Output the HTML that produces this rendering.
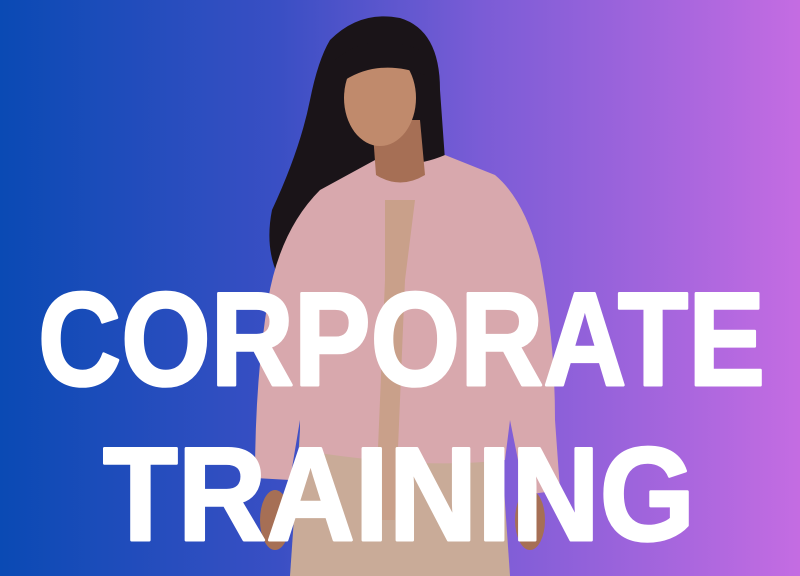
<!DOCTYPE html>
<html><head><meta charset="utf-8"><style>
html,body{margin:0;padding:0;width:800px;height:576px;overflow:hidden}
body{background:linear-gradient(90deg,#0a4ab4 0%,#3a4fc4 35%,#7a5cd6 60%,#c46ce2 100%)}
svg{position:absolute;left:0;top:0}
</style></head><body>
<svg width="800" height="576" viewBox="0 0 800 576">
  <!-- hair -->
  <path d="M330 40 Q360 10 400 18 Q440 30 440 90 L445 160 Q420 180 380 175 L360 210 L340 290 L290 295 Q262 260 272 210 Q300 150 310 100 Q318 60 330 40Z" fill="#1a1418"/>
  <!-- pants -->
  <path d="M300 430 L500 430 L510 576 L290 576Z" fill="#c9ab98"/>
  <!-- top -->
  <path d="M375 160 Q410 170 445 155 L495 175 Q525 200 540 260 Q555 340 555 420 L560 490 L525 495 L510 420 L505 460 Q420 470 300 450 L300 420 L290 480 L255 478 Q255 380 268 300 Q280 230 320 190Z" fill="#d8a8ad"/>
  <!-- tie -->
  <path d="M385 200 L415 200 L405 280 L395 520 L375 520 L385 280Z" fill="#c9a08a"/>
  <!-- neck/face -->
  <path d="M372 120 L420 120 L425 175 Q400 190 376 175Z" fill="#a66f55"/>
  <ellipse cx="380" cy="98" rx="36" ry="48" fill="#c08a6c"/>
  <path d="M335 60 Q370 30 420 50 L425 75 Q380 58 345 80 L340 150 L330 140Z" fill="#1a1418"/>
  <!-- hands -->
  <ellipse cx="275" cy="520" rx="15" ry="30" fill="#a66f55"/>
  <ellipse cx="530" cy="520" rx="15" ry="30" fill="#a66f55"/>
  <g font-family="Liberation Sans, sans-serif" font-weight="bold" fill="#fff" stroke="#fff" stroke-width="3" stroke-linejoin="round" font-size="133">
    <text x="38" y="385" textLength="727" lengthAdjust="spacingAndGlyphs">CORPORATE</text>
    <text x="103" y="540" textLength="592" lengthAdjust="spacingAndGlyphs">TRAINING</text>
  </g>
</svg>
</body></html>
